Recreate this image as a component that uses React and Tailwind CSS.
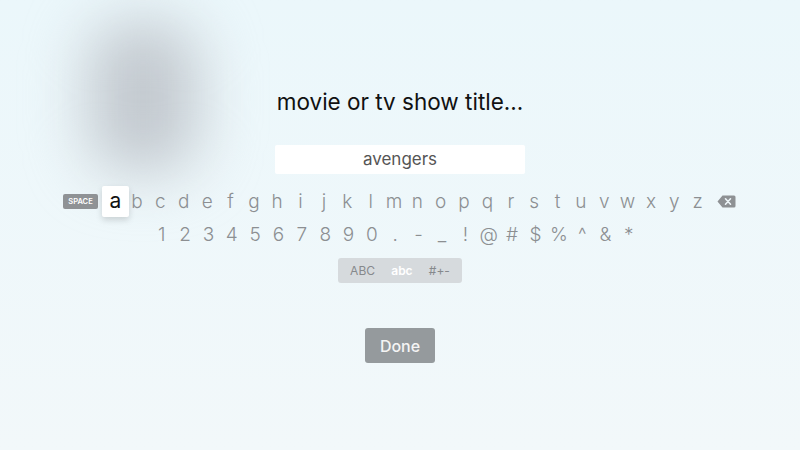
const letters = 'bcdefghijklmnopqrstuvwxyz'.split('');
const symbols = ['1', '2', '3', '4', '5', '6', '7', '8', '9', '0', '.', '-', '_', '!', '@', '#', '$', '%', '^', '&', '*'];

function Key({ children }) {
  return (
    <span className="w-[23.36px] shrink-0 text-center text-[19px] font-light text-[#8c8f92] leading-none">
      {children}
    </span>
  );
}

function Backspace() {
  return (
    <svg width="19" height="13" viewBox="0 0 19 13" className="ml-[8px]">
      <path d="M5.5 0.5 H17 a1.5 1.5 0 0 1 1.5 1.5 V11 a1.5 1.5 0 0 1 -1.5 1.5 H5.5 L0.5 6.5 Z" fill="#8e9194" />
      <path d="M8.5 3.8 L13.5 9.2 M13.5 3.8 L8.5 9.2" stroke="#eef6f9" strokeWidth="1.6" strokeLinecap="round" />
    </svg>
  );
}

export default function App() {
  return (
    <div
      className="relative w-[800px] h-[450px] overflow-hidden bg-gradient-to-b from-[#ebf7fb] to-[#f2f8fa]"
      style={{ fontFamily: 'Inter, "Noto Sans", sans-serif' }}
    >
      <div className="absolute left-[88px] top-[22px] w-[110px] h-[150px] rounded-[40px] bg-[#c3c9cf] blur-[30px]" />

      <div className="relative flex flex-col items-center pt-[87px]">
        <h1 className="text-[22.5px] leading-[30px] text-[#111]">movie or tv show title...</h1>

        <div className="mt-[28px] w-[250px] h-[29px] bg-white rounded-[2px] flex items-center justify-center text-[17px] text-[#555]">
          avengers
        </div>

        <div className="mt-[12px] w-[674px]">
          <div className="flex items-center h-[31px]">
            <span className="w-[35px] h-[15px] rounded-[2px] bg-[#8f9295] text-white text-[7.5px] font-semibold flex items-center justify-center mr-[4px]">
              SPACE
            </span>
            <span className="w-[27px] h-[31px] -mr-[3.64px] shrink-0 bg-white rounded-[2px] shadow-[0_3px_6px_rgba(0,0,0,0.15)] flex items-center justify-center text-[21px] text-[#111] leading-none pb-[2px]">
              a
            </span>
            {letters.map((l) => (
              <Key key={l}>{l}</Key>
            ))}
            <Backspace />
          </div>
          <div className="flex items-center h-[20px] mt-[7px] pl-[87px]">
            {symbols.map((s) => (
              <Key key={s}>{s}</Key>
            ))}
          </div>
        </div>

        <div className="mt-[14px] w-[124px] h-[25px] rounded-[3px] bg-[#d6dadd] flex items-center justify-around px-[4px] text-[12px]">
          <span className="text-[#86898c]">ABC</span>
          <span className="text-white font-semibold">abc</span>
          <span className="text-[#86898c]">#+-</span>
        </div>

        <button className="mt-[45px] w-[70px] h-[35px] rounded-[3px] bg-[#959a9d] text-[#f4f4f4] text-[16px] font-medium">
          Done
        </button>
      </div>
    </div>
  );
}
